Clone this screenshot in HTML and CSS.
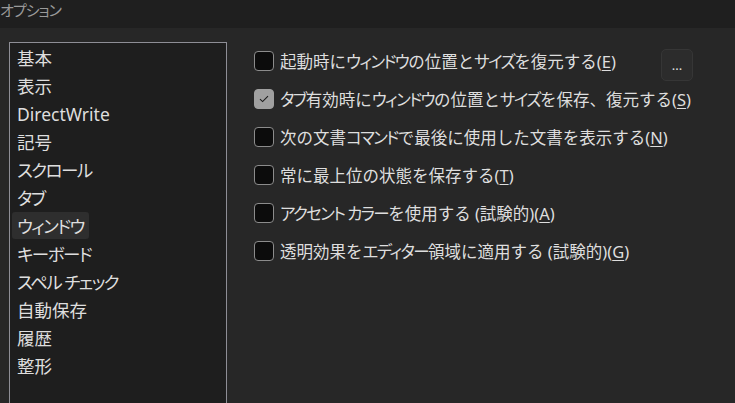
FILE: index.html
```html
<!DOCTYPE html>
<html lang="ja">
<head>
  <meta charset="UTF-8" />
  <title>オプション</title>
  <link rel="stylesheet" href="styles.css">
</head>
<body>

  <div class="titlebar"><span class="k">オプション</span></div>

  <div class="main">
    <ul class="category-list">
      <li>基本</li>
      <li>表示</li>
      <li>DirectWrite</li>
      <li>記号</li>
      <li><span class="k">スクロール</span></li>
      <li><span class="k">タブ</span></li>
      <li class="selected"><span class="k">ウィンドウ</span></li>
      <li><span class="k">キーボード</span></li>
      <li><span class="k">スペル チェック</span></li>
      <li>自動保存</li>
      <li>履歴</li>
      <li>整形</li>
    </ul>

    <div class="settings">
      <div class="option">
        <span class="check"></span>
        <span class="label">起動時に<span class="k">ウィンドウ</span>の位置と<span class="k">サイズ</span>を復元する(<u>E</u>)</span>
        <button class="more">...</button>
      </div>
      <div class="option">
        <span class="check checked">
          <svg width="10" height="8" viewBox="0 0 10 8"><path d="M1 4.2 L3.6 6.6 L9 1.2" fill="none" stroke="#1b1b1b" stroke-width="1.1"/></svg>
        </span>
        <span class="label"><span class="k">タブ</span>有効時に<span class="k">ウィンドウ</span>の位置と<span class="k">サイズ</span>を保存、復元する(<u>S</u>)</span>
      </div>
      <div class="option">
        <span class="check"></span>
        <span class="label">次の文書<span class="k">コマンド</span>で最後に使用した文書を表示する(<u>N</u>)</span>
      </div>
      <div class="option">
        <span class="check"></span>
        <span class="label">常に最上位の状態を保存する(<u>T</u>)</span>
      </div>
      <div class="option">
        <span class="check"></span>
        <span class="label"><span class="k">アクセント カラー</span>を使用する (試験的)(<u>A</u>)</span>
      </div>
      <div class="option">
        <span class="check"></span>
        <span class="label">透明効果を<span class="k">エディター</span>領域に適用する (試験的)(<u>G</u>)</span>
      </div>
    </div>
  </div>

</body>
</html>
```

FILE: styles.css
```css
body {
  margin: 0;
  height: 403px;
  overflow: hidden;
  background: #272727;
  font-family: "Noto Sans", "Noto Sans CJK JP", sans-serif;
  color: #dedede;
}
/* katakana runs: proportional and a bit tighter, like the UI font */
.k {
  font-feature-settings: "palt";
  letter-spacing: -1px;
}
.titlebar {
  height: 28px;
  background: #1f1f1f;
  color: #9a9a9a;
  font-size: 15px;
  line-height: 20px;
}
.main {
  display: flex;
  padding: 14px 0 0 9px;
}
.category-list {
  list-style: none;
  margin: 0;
  padding: 1px 0 0 2px;
  width: 214px;
  height: 400px;
  border: 1px solid #8e8e96;
  background: #1e1e1e;
  font-size: 17.5px;
}
.category-list .k {
  letter-spacing: -1.5px;
}
.category-list li {
  width: fit-content;
  height: 27px;
  line-height: 28px;
  margin-bottom: 1px;
  padding: 0 5px;
  border-radius: 3px;
}
.category-list li.selected {
  background: #2e2e2e;
}
.settings {
  width: 439px;
  margin-left: 27px;
}
.settings .k {
  letter-spacing: -1.6px;
}
.option {
  display: flex;
  align-items: center;
  height: 38px;
  font-size: 16.5px;
}
.check {
  flex: none;
  width: 18px;
  height: 18px;
  border: 1px solid #8c8c8c;
  border-radius: 4px;
  background: #0c0c0c;
  margin-right: 6px;
  display: flex;
  align-items: center;
  justify-content: center;
}
.check.checked {
  background: #a0a0a0;
  border-color: #a0a0a0;
}
.label {
  white-space: nowrap;
}
.label u {
  text-underline-offset: 2px;
}
.more {
  flex: none;
  margin: 8px 0 0 auto;
  width: 32px;
  height: 32px;
  background: #2c2c2c;
  border: 1px solid #363636;
  border-radius: 5px;
  color: #e0e0e0;
  font-family: "Noto Sans", sans-serif;
  font-size: 13px;
  line-height: 20px;
  padding: 0;
}
```
